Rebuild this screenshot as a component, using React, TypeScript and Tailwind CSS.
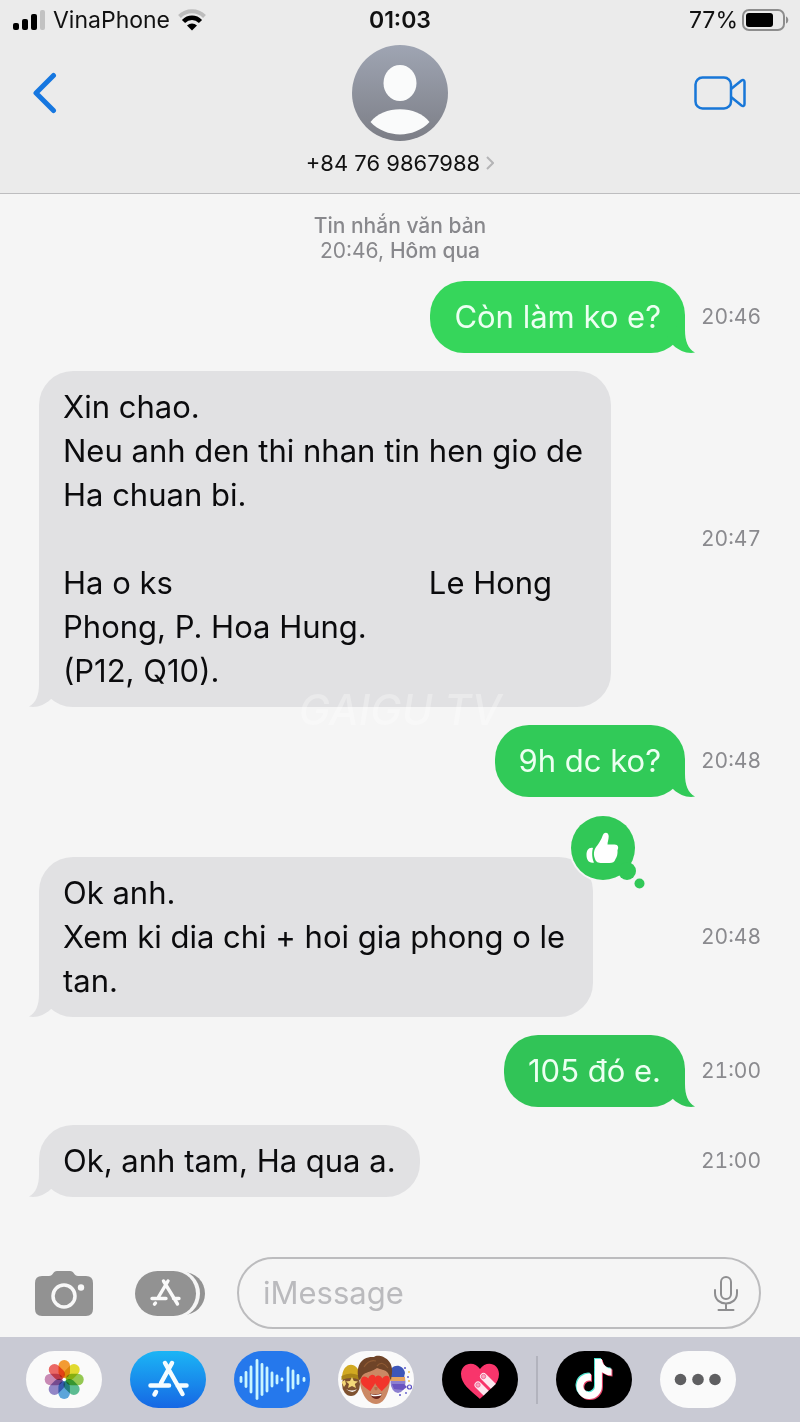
import { ReactNode } from "react";
import clsx from "clsx";
import { FaTiktok } from "react-icons/fa";

interface Message {
  id: number;
  mine: boolean;
  time: string;
  lines: ReactNode[];
  color: string;
  liked?: boolean;
}

const messages: Message[] = [
  { id: 1, mine: true, time: "20:46", color: "#36d65b", lines: ["Còn làm ko e?"] },
  {
    id: 2,
    mine: false,
    time: "20:47",
    color: "#e1e1e3",
    lines: [
      "Xin chao.",
      "Neu anh den thi nhan tin hen gio de",
      "Ha chuan bi.",
      "",
      <>
        Ha o ks
        <span className="inline-block w-64" />
        Le Hong
      </>,
      "Phong, P. Hoa Hung.",
      "(P12, Q10).",
    ],
  },
  { id: 3, mine: true, time: "20:48", color: "#31ca58", lines: ["9h dc ko?"] },
  {
    id: 4,
    mine: false,
    time: "20:48",
    color: "#e1e1e3",
    lines: ["Ok anh.", "Xem ki dia chi + hoi gia phong o le", "tan."],
    liked: true,
  },
  { id: 5, mine: true, time: "21:00", color: "#31c457", lines: ["105 đó e."] },
  { id: 6, mine: false, time: "21:00", color: "#e1e1e3", lines: ["Ok, anh tam, Ha qua a."] },
];

const Tail = ({ mine, color }: { mine: boolean; color: string }) => (
  <svg
    viewBox="0 0 28 36"
    aria-hidden="true"
    className={clsx(
      "absolute bottom-0 h-9 w-7",
      mine ? "-right-[10px]" : "-left-[10px] -scale-x-100"
    )}
  >
    <path fill={color} d="M18 0V13C18 24 21 32 28 35.6C20 37 12.5 34 6.5 28.5L0 20Z" />
  </svg>
);

const Reaction = () => (
  <svg
    viewBox="0 0 76 76"
    role="img"
    aria-label="Liked"
    className="absolute -top-[43px] -right-[52px] size-[76px]"
  >
    <circle cx="34" cy="34" r="34" fill="#f5f5f5" />
    <g fill="#31c857">
      <circle cx="34" cy="34" r="32" />
      <circle cx="58" cy="57" r="9" />
      <circle cx="70.5" cy="69.5" r="5" />
    </g>
    <path
      fill="#fff"
      d="M25.5 36C27 32 31 29 33.5 22C34.5 17.5 39.5 17.5 39.7 22C39.8 25 38.5 28 38.5 30.5H45.5C49.5 30.5 49.8 34 48.5 36C48.8 40 48 43 46.5 45C45.5 48 43.5 49 40.5 49H33C29 49 27 48 26 45C24.8 42 24.5 39 25.5 36Z"
    />
    <path fill="#fff" d="M24 34C20 33 17.5 36 17.5 41C17.5 46 20 49.5 25 48.5C22.8 44 22.8 38 24 34Z" />
  </svg>
);

const Bubble = ({ message }: { message: Message }) => {
  const { mine, color, lines, time, liked } = message;
  return (
    <li className={clsx("flex items-center", liked && "mt-[42px]")}>
      <div className={clsx("flex flex-1", mine ? "justify-end" : "justify-start")}>
        <div
          className={clsx(
            "relative rounded-[34px] py-[14px] pl-6 text-[31px] leading-[44px] whitespace-nowrap",
            mine ? "text-[#ecfff1]" : "text-[#0b0b0d]",
            lines.length > 1 ? "pr-7" : "pr-6"
          )}
          style={{ backgroundColor: color }}
        >
          <Tail mine={mine} color={color} />
          <div className="relative">
            {lines.map((line, i) => (
              <p key={i} className="min-h-[44px]">
                {line}
              </p>
            ))}
          </div>
          {liked && <Reaction />}
        </div>
      </div>
      <time className="w-[76px] text-right text-[21px] leading-6 text-[#8a8a8e] tabular-nums">
        {time}
      </time>
    </li>
  );
};

const StatusBar = () => (
  <div className="grid h-[45px] grid-cols-3 items-start px-3 pt-[6px] text-[23px] leading-7 text-[#111]">
    <div className="flex items-center gap-2">
      <svg viewBox="0 0 33 20" className="h-5 w-[33px]" aria-hidden="true">
        <rect x="1" y="13" width="6" height="7" rx="2" />
        <rect x="10" y="9" width="6" height="11" rx="2" />
        <rect x="19" y="4" width="6" height="16" rx="2" />
        <rect x="28" y="0" width="5" height="20" rx="2" fill="#c2c2c2" />
      </svg>
      <span>VinaPhone</span>
      <svg viewBox="0 0 28 22" className="h-[22px] w-7" aria-hidden="true" fill="none">
        <path d="M1.5 7.5C8.5 0.5 19.5 0.5 26.5 7.5" stroke="#bdbdbd" strokeWidth="4" />
        <path d="M5.5 12.5C10.5 7.5 17.5 7.5 22.5 12.5" stroke="#000" strokeWidth="4.5" />
        <path d="M9 16.5C12 13.8 16 13.8 19 16.5L14 21.5Z" fill="#000" />
      </svg>
    </div>
    <span className="text-center font-semibold">01:03</span>
    <div className="flex items-center justify-end gap-1">
      <span>77%</span>
      <svg viewBox="0 0 47 22" className="-mr-[1px] h-[22px] w-[47px]" aria-hidden="true">
        <rect x="1" y="1" width="41" height="20" rx="6" fill="none" stroke="#8d8d8d" strokeWidth="2" />
        <rect x="4" y="4" width="27" height="14" rx="3" />
        <path d="M44 7.5C47 8.5 47 13.5 44 14.5Z" fill="#8d8d8d" />
      </svg>
    </div>
  </div>
);

const Header = () => (
  <header className="border-b border-[#bdbdbf] bg-[#ebebeb] pb-[17px]">
    <StatusBar />
    <div className="grid grid-cols-3 items-start">
      <button aria-label="Back" className="ml-8 flex h-24 w-10 items-center">
        <svg viewBox="0 0 25 42" className="h-[42px] w-[25px]" fill="none">
          <path
            d="M21.5 3.5L4 21L21.5 38.5"
            stroke="#1677e0"
            strokeWidth="5"
            strokeLinecap="round"
            strokeLinejoin="round"
          />
        </svg>
      </button>
      <button className="flex flex-col items-center gap-[9px]">
        <svg viewBox="0 0 96 96" className="size-24" aria-hidden="true">
          <defs>
            <linearGradient id="avatar" x1="0" y1="0" x2="0" y2="1">
              <stop offset="0" stopColor="#9fa5b3" />
              <stop offset="1" stopColor="#7c7e86" />
            </linearGradient>
          </defs>
          <circle cx="48" cy="48" r="48" fill="url(#avatar)" />
          <ellipse cx="48" cy="38" rx="16.5" ry="18" fill="#fafbfb" />
          <path d="M18.5 77C31 60 65 60 77.5 77C62 93.5 34 93.5 18.5 77Z" fill="#fafbfb" />
        </svg>
        <span className="flex items-center gap-[6px] text-[22px] leading-[26px] whitespace-nowrap text-[#111]">
          +84 76 9867988
          <svg viewBox="0 0 8 14" className="h-[14px] w-2" fill="none" aria-hidden="true">
            <path d="M1 1L7 7L1 13" stroke="#b4b4b6" strokeWidth="2" />
          </svg>
        </span>
      </button>
      <button aria-label="FaceTime" className="mr-[54px] flex h-24 items-center justify-self-end">
        <svg
          viewBox="0 0 52 34"
          className="h-[34px] w-[52px]"
          fill="none"
          stroke="#1877d8"
          strokeWidth="2.5"
          strokeLinejoin="round"
        >
          <rect x="1.5" y="1.5" width="35.5" height="31" rx="7" />
          <path d="M37 13L47.5 4.5C49 3.5 50.5 4 50.5 6V28C50.5 30 49 30.5 47.5 29.5L37 21" />
        </svg>
      </button>
    </div>
  </header>
);

const Composer = () => (
  <div className="flex items-center pr-[39px] pb-2 pl-[35px]">
    <button aria-label="Camera" className="shrink-0">
      <svg viewBox="0 0 58 45" className="h-[45px] w-[58px]">
        <path
          fill="#929292"
          d="M7 5H14C16 5 17 4 18 2.5C19 1 20 0 22 0H35C37 0 38 1 39 2.5C40 4 41 5 43 5H51Q58 5 58 12V38Q58 45 51 45H7Q0 45 0 38V12Q0 5 7 5Z"
        />
        <circle cx="29" cy="25" r="11" fill="none" stroke="#f8f8f8" strokeWidth="3.5" />
        <circle cx="46" cy="16.5" r="3.2" fill="#f8f8f8" />
      </svg>
    </button>
    <button aria-label="Apps" className="ml-[42px] shrink-0">
      <svg viewBox="0 0 70 45" className="h-[45px] w-[70px]">
        <rect x="20" y="1" width="50" height="43" rx="21.5" fill="#929292" />
        <rect x="0" y="-2" width="65" height="49" rx="24.5" fill="#f5f5f5" />
        <rect width="61" height="45" rx="22.5" fill="#929292" />
        <path
          d="M33 10L23.5 26M28.5 10L42.5 33M17 27.5H31M38.5 27.5H44M20.5 32L19.5 33.2"
          stroke="#fafafa"
          strokeWidth="3.4"
          strokeLinecap="round"
          fill="none"
        />
      </svg>
    </button>
    <div className="ml-8 flex h-[72px] min-w-0 flex-1 items-center rounded-full border-2 border-[#bcbcbe] px-6">
      <input
        aria-label="iMessage"
        placeholder="iMessage"
        className="min-w-0 flex-1 bg-transparent text-[31px] leading-10 outline-none placeholder:text-[#bababd]"
      />
      <button aria-label="Dictate" className="-mr-[3px] shrink-0">
        <svg
          viewBox="0 0 24 35"
          className="h-[35px] w-6"
          fill="none"
          stroke="#8e8e90"
          strokeWidth="2"
          strokeLinecap="round"
        >
          <rect x="7" y="1" width="10" height="22" rx="5" />
          <path d="M1 14V17C1 31 23 31 23 17V14M12 28V34M4.5 34H19.5" />
        </svg>
      </button>
    </div>
  </div>
);

const petals = ["#f7941e", "#e3dc1b", "#8cc63f", "#4cb98a", "#4d9fdb", "#8a7cc4", "#c77fb0", "#ee5a56"];

const PhotosIcon = () => (
  <>
    <rect width="76" height="57" fill="#fafafa" />
    {petals.map((fill, i) => (
      <rect
        key={fill}
        x="32.5"
        y="9"
        width="11.5"
        height="18"
        rx="5.7"
        fill={fill}
        fillOpacity="0.9"
        className="mix-blend-multiply"
        transform={`rotate(${i * 45} 38.2 28.5)`}
      />
    ))}
    <circle cx="38.2" cy="28.5" r="1.5" fill="#fff" />
  </>
);

const StoreIcon = () => (
  <>
    <defs>
      <linearGradient id="store" x1="0" y1="0" x2="0" y2="1">
        <stop offset="0" stopColor="#1bb5f5" />
        <stop offset="1" stopColor="#1667e4" />
      </linearGradient>
    </defs>
    <rect width="76" height="57" fill="url(#store)" />
    <path
      d="M42 12L31 32M35 12L52.5 43M20.5 34.5H39M47.5 34.5H56.5M26 41L24.5 43.5"
      stroke="#f4fcff"
      strokeWidth="4.5"
      strokeLinecap="round"
      fill="none"
    />
  </>
);

const bars = [
  [7, 7], [12, 17], [17, 28], [23, 41], [28, 33], [33, 26], [38, 16],
  [43, 10], [48, 4], [54, 26], [59, 20], [64, 11], [70, 5],
];

const AudioIcon = () => (
  <>
    <rect width="76" height="57" fill="#2578ec" />
    {bars.map(([x, h]) => (
      <rect key={x} x={x - 1.4} y={28.5 - h / 2} width="2.8" height={h} rx="1.4" fill="#c9f5ff" />
    ))}
  </>
);

const heart = "M0 4C-2 1-6 1-6.5 5C-7 9-3 12 1 15C4 11 7 8 6.5 4C6 0 1.5 0 0 4Z";

const MemojiIcon = () => (
  <>
    <rect width="76" height="57" fill="#fafafa" />
    {/* left face with beanie and star eyes */}
    <ellipse cx="13" cy="33" rx="9" ry="12" fill="#7f5230" />
    <path d="M4 27C4 10 21 9 22 26Z" fill="#d1a921" />
    <path d="M3.5 25Q13 20 22 25V29Q13 25 3.5 29Z" fill="#a98418" />
    <path d="M14 26L15.8 30L20 30.5L16.8 33L18 37L14 35L10 37L11 33L8 30.5L12 30Z" fill="#f4d878" />
    <path d="M3.5 31L7 29L8 33L6 36Z" fill="#f4d878" />
    <path d="M8 38Q14 41 19 38Q15 44 8 38Z" fill="#fff" />
    {/* right face with party hat and horn */}
    <ellipse cx="60" cy="31" rx="7.5" ry="11" fill="#8c7fd0" />
    <path d="M51 24C52 12 65 12 67 22L66 26H51Z" fill="#3d56b8" />
    <path d="M51 26H67V30H51Z" fill="#e6a45e" />
    <path d="M54 33H66L69 36L65 39L56 38Z" fill="#6a55c0" />
    <circle cx="71.5" cy="36" r="2" fill="none" stroke="#5b4fc4" strokeWidth="1.2" />
    <g fill="#5a55c8">
      <circle cx="67" cy="17" r="1" />
      <circle cx="70" cy="26" r="0.9" />
      <circle cx="62" cy="44" r="1" />
      <circle cx="68" cy="42" r="0.9" />
    </g>
    <circle cx="71" cy="21" r="0.9" fill="#e7bb4b" />
    <circle cx="71" cy="30" r="0.9" fill="#e7bb4b" />
    {/* centre face */}
    <path d="M22 22C20 36 27 53 38 53C48 53 53 36 52 22C46 12 28 12 22 22Z" fill="#cb8864" />
    <path d="M21 29C17 16 23 5 36 6C40 2 56 7 54 22L53 29C51 27 52 24 49 21C46 18 43 19 39 17C35 20 29 21 26 23C23 25 24 27 21 29Z" fill="#6f4428" />
    <path d="M26 16Q31 8 38 10M39 15Q44 9 50 17" stroke="#8f5a33" strokeWidth="1.2" fill="none" />
    <path d={heart} transform="translate(30 23) rotate(-4) scale(1.15)" fill="#f2342b" />
    <path d={heart} transform="translate(45 23) rotate(8) scale(1.15)" fill="#f2342b" />
    <path d="M36.5 36Q36 39 38 39.5Q40 39 39.5 36" fill="#b56e4c" />
    <path d="M32 42.5Q38 44.5 44 42Q43 48 38 48Q34 47.5 32 42.5Z" fill="#6b261c" />
    <path d="M32.5 43Q38 45 43.8 42.5L43 44.5Q38 46 33.5 44.8Z" fill="#fff" />
  </>
);

const DigitalTouchIcon = () => (
  <>
    <rect width="76" height="57" fill="#000" />
    <path d="M38 48C28 39 19 33 19 23C19 12 32 9 38 18C44 9 57 12 57 23C57 33 48 39 38 48Z" fill="#f8356b" />
    <g strokeLinecap="round" stroke="#fde8f0" strokeWidth="7">
      <path d="M41.5 25.5L52 36" />
      <path d="M36 34L46 44" />
    </g>
    <g fill="#f8a5c0" stroke="#f0588a" strokeWidth="0.8">
      <circle cx="41.5" cy="25.5" r="2.2" />
      <circle cx="36" cy="34" r="2.2" />
    </g>
    <path d="M57 30L38 48L46 54L62 40Z" fill="#000" />
  </>
);

const TiktokIcon = () => (
  <>
    <rect width="76" height="57" fill="#000" />
    <FaTiktok x={17} y={7} size={40} color="#4fe3d0" />
    <FaTiktok x={19} y={9} size={40} color="#e8446a" />
    <FaTiktok x={18} y={8} size={40} color="#fff" />
  </>
);

const MoreIcon = () => (
  <>
    <rect width="76" height="57" fill="#fafafa" />
    <g fill="#5f5f61">
      <circle cx="20.5" cy="28.5" r="5.8" />
      <circle cx="38" cy="28.5" r="5.8" />
      <circle cx="55" cy="28.5" r="5.8" />
    </g>
  </>
);

const DockButton = ({ label, children }: { label: string; children: ReactNode }) => (
  <button aria-label={label} className="h-[57px] w-[76px] overflow-hidden rounded-full">
    <svg viewBox="0 0 76 57" className="h-full w-full">
      {children}
    </svg>
  </button>
);

const Dock = () => (
  <nav aria-label="iMessage apps" className="flex h-[85px] items-center gap-7 bg-[#c9cad4] px-[26px]">
    <DockButton label="Photos"><PhotosIcon /></DockButton>
    <DockButton label="App Store"><StoreIcon /></DockButton>
    <DockButton label="Audio"><AudioIcon /></DockButton>
    <DockButton label="Memoji"><MemojiIcon /></DockButton>
    <DockButton label="Digital Touch"><DigitalTouchIcon /></DockButton>
    <div className="-mx-[10px] h-12 w-[2px] bg-[#b2b3bd]" />
    <DockButton label="TikTok"><TiktokIcon /></DockButton>
    <DockButton label="More"><MoreIcon /></DockButton>
  </nav>
);

export default function App() {
  return (
    <div className="flex min-h-screen flex-col bg-[#f5f5f5] font-['Inter','Liberation_Sans',sans-serif]">
      <Header />
      <main className="relative flex-1 px-[39px] pt-[19px]">
        <p className="text-center text-[21px] leading-[25px] text-[#88888c]">
          <span className="font-medium">Tin nhắn văn bản</span>
          <br />
          20:46, <span className="font-medium">Hôm qua</span>
        </p>
        <ul className="mt-[18px] flex flex-col gap-[18px]">
          {messages.map((message) => (
            <Bubble key={message.id} message={message} />
          ))}
        </ul>
        <span className="pointer-events-none absolute inset-x-0 top-[496px] text-center text-[42px] leading-10 font-medium text-white/30 italic">
          GAIGU TV
        </span>
      </main>
      <Composer />
      <Dock />
    </div>
  );
}
